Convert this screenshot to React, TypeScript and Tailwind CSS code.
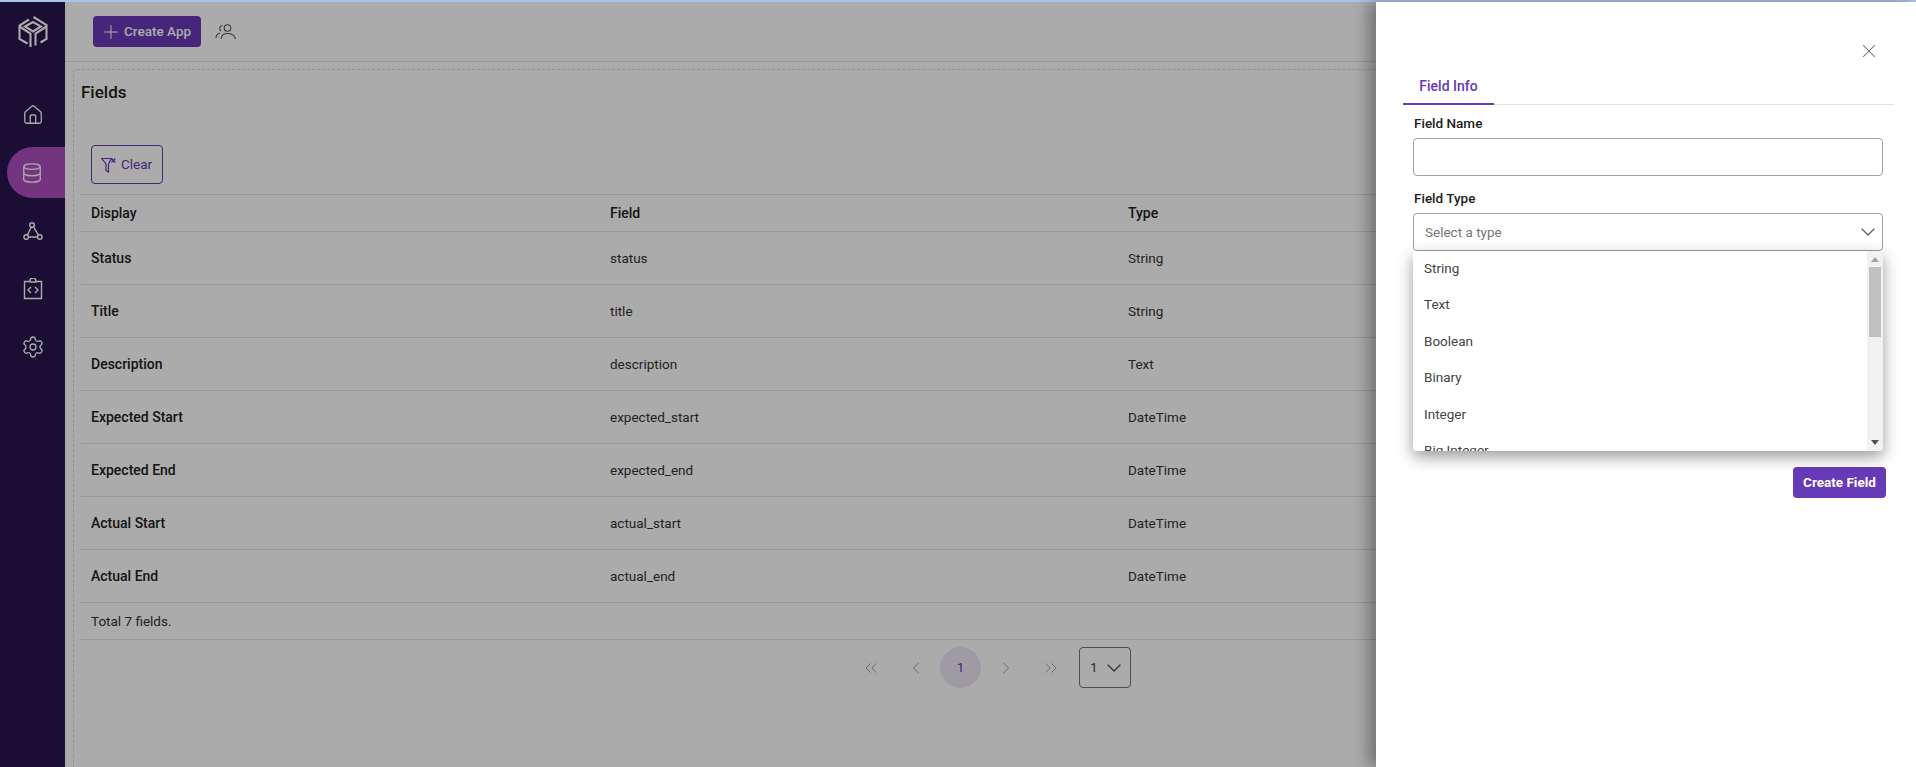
import { ChevronDown, ChevronLeft, ChevronRight, ChevronsLeft, ChevronsRight, Database, House, Plus, Settings, X } from 'lucide-react'

const fields = [
  ['Status', 'status', 'String'],
  ['Title', 'title', 'String'],
  ['Description', 'description', 'Text'],
  ['Expected Start', 'expected_start', 'DateTime'],
  ['Expected End', 'expected_end', 'DateTime'],
  ['Actual Start', 'actual_start', 'DateTime'],
  ['Actual End', 'actual_end', 'DateTime'],
]

const types = ['String', 'Text', 'Boolean', 'Binary', 'Integer', 'Big Integer']

function Logo() {
  return (
    <svg width="30" height="32" viewBox="0 0 30 32" fill="none" stroke="currentColor" strokeWidth="2.1">
      <path d="M11 3.500L1.500 9.500V23l8 4.500" />
      <path d="M15.500 1L28.500 9v14l-6 3.500" />
      <path d="M7 10.500l8-4.500 8 4.500-8 5z" />
      <path d="M1.500 10.500L12.500 17.500V31M28.500 10.500L17.500 17.500v12" />
    </svg>
  )
}

function GraphIcon() {
  return (
    <svg width="20" height="20" viewBox="0 0 20 20" fill="none" stroke="currentColor" strokeWidth="1.4">
      <circle cx="9" cy="4" r="2.300" />
      <circle cx="3.200" cy="16" r="2.300" />
      <circle cx="16.800" cy="16" r="2.300" />
      <path d="M8.200 6.200L4.300 14M10.500 5.800L15.400 14M5.500 16h9" />
    </svg>
  )
}

function CodeIcon() {
  return (
    <svg width="20" height="22" viewBox="0 0 20 22" fill="none" stroke="currentColor" strokeWidth="1.4">
      <path d="M7 3.500H1.500v17h17v-17H13" />
      <path d="M7 4V3a3 3 0 0 1 6 0v1z" />
      <path d="M8 9l-3 3 3 3M12 9l3 3-3 3" />
    </svg>
  )
}

function UsersIcon() {
  return (
    <svg width="22" height="18" viewBox="0 0 22 18" fill="none" stroke="currentColor" strokeWidth="1.1">
      <circle cx="12.500" cy="5" r="3.300" />
      <path d="M6 16c.4-3.600 3-5.500 6.500-5.500S19.600 12.400 20.500 16" />
      <path d="M7.500 2.500A3 3 0 0 0 6 8M1 15c.2-2.800 1.600-4.500 4-5" />
    </svg>
  )
}

function FilterClearIcon() {
  return (
    <svg width="15" height="16" viewBox="0 0 15 16" fill="none" stroke="currentColor" strokeWidth="1.2">
      <path d="M.8 1.500h9.500L7.500 7v8L5 13.500V7z" />
      <path d="M10.500 1.500l3.800 4M14.300 1.500l-3.800 4" />
    </svg>
  )
}

function Sidebar() {
  return (
    <aside className="w-[65px] shrink-0 flex flex-col items-center bg-[#27164f] text-white">
      <div className="h-[60px] flex items-center justify-center">
        <Logo />
      </div>
      <div className="mt-[24px] flex flex-col w-full">
        <div className="h-[58px] flex items-center justify-center">
          <House className="h-[22px] w-[22px]" strokeWidth={1.4} />
        </div>
        <div className="h-[58px] flex items-center justify-end">
          <div className="mb-[1px] h-[51px] w-[58px] rounded-l-[26px] bg-[#af4ebe] flex items-center pl-[14px]">
            <Database className="h-[22px] w-[22px]" strokeWidth={1.4} />
          </div>
        </div>
        <div className="h-[58px] flex items-center justify-center">
          <GraphIcon />
        </div>
        <div className="h-[58px] flex items-center justify-center">
          <CodeIcon />
        </div>
        <div className="h-[58px] flex items-center justify-center">
          <Settings className="h-[24px] w-[24px]" strokeWidth={1.3} />
        </div>
      </div>
    </aside>
  )
}

function FieldsTable() {
  return (
    <div className="mt-[10px]">
      <div className="grid grid-cols-[519px_518px_519px_1fr] h-[38px] items-center border-y border-[#e5e5e5] pl-[10px] text-[14px] font-medium text-[#222]">
        <div>Display</div>
        <div>Field</div>
        <div>Type</div>
      </div>
      {fields.map(([display, name, type]) => (
        <div
          key={name}
          className="grid grid-cols-[519px_518px_519px_1fr] h-[53px] items-center border-b border-[#e5e5e5] pl-[10px] text-[13.500px] text-[#333]"
        >
          <div className="text-[14px] font-medium text-[#222]">{display}</div>
          <div>{name}</div>
          <div>{type}</div>
        </div>
      ))}
      <div className="h-[37px] flex items-center border-b border-[#e5e5e5] pl-[10px] text-[13.500px] text-[#333]">
        Total 7 fields.
      </div>
    </div>
  )
}

function Pagination() {
  return (
    <div className="mt-[7px] flex items-center justify-center gap-1 text-[#9e9e9e]">
      <div className="h-[41px] w-[41px] flex items-center justify-center"><ChevronsLeft className="h-[20px] w-[20px]" strokeWidth={1.2} /></div>
      <div className="h-[41px] w-[41px] flex items-center justify-center"><ChevronLeft className="h-[20px] w-[20px]" strokeWidth={1.2} /></div>
      <div className="h-[41px] w-[41px] flex items-center justify-center rounded-full bg-[#ede7f6] text-[13.500px] text-[#673ab7]">1</div>
      <div className="h-[41px] w-[41px] flex items-center justify-center"><ChevronRight className="h-[20px] w-[20px]" strokeWidth={1.2} /></div>
      <div className="h-[41px] w-[41px] flex items-center justify-center"><ChevronsRight className="h-[20px] w-[20px]" strokeWidth={1.2} /></div>
      <div className="ml-[4px] h-[41px] w-[52px] flex items-center gap-[4px] rounded border border-[#757575] pl-[10px] text-[13.500px] text-[#444]">
        1
        <ChevronDown className="h-[24px] w-[24px]" strokeWidth={1.2} />
      </div>
    </div>
  )
}

function Drawer() {
  return (
    <div className="absolute bottom-0 right-0 top-[2px] w-[540px] bg-white pl-[27px] pr-[22px] shadow-[-8px_0_14px_rgba(0,0,0,0.32)]">
      <div className="flex justify-end pr-[14px] pt-[38px]">
        <X className="h-[22px] w-[22px] text-[#666]" strokeWidth={1.1} />
      </div>
      <div className="mt-[3px] border-b border-[#e0e0e0]">
        <div className="-mb-px h-[40px] w-[91px] border-b-2 border-[#673ab7] pt-[11px] text-center text-[14px] font-medium text-[#673ab7]">
          Field Info
        </div>
      </div>
      <div className="relative pl-[10px] pr-[11px] text-[13.500px]">
        <label className="mt-[8px] block h-[25px] pl-[1px] font-medium text-[#222]">Field Name</label>
        <div className="h-[38px] rounded border border-[#9e9e9e]" />
        <label className="mt-[12px] block h-[25px] pl-[1px] font-medium text-[#222]">Field Type</label>
        <div className="flex h-[38px] items-center justify-between rounded border border-[#9e9e9e] pl-[11px] pr-[2px] text-[#757575]">
          Select a type
          <ChevronDown className="h-[24px] w-[24px] text-[#555]" strokeWidth={1.1} />
        </div>
        <div className="mt-[37px] h-[101px] rounded border border-[#9e9e9e]" />
        <div className="mt-[78px] flex justify-end -mr-[3px]">
          <button className="h-[31px] w-[93px] rounded bg-[#673ab7] text-[13.500px] font-bold text-white">Create Field</button>
        </div>

        <div className="absolute left-[10px] right-[11px] top-[138px] h-[200px] overflow-hidden rounded-b bg-white shadow-[0_6px_16px_rgba(0,0,0,0.4)]">
          <div className="-mt-[1px] pl-[11px] text-[#444]">
            {types.map((t) => (
              <div key={t} className="flex h-[36.400px] items-center">
                {t}
              </div>
            ))}
          </div>
          <div className="absolute bottom-0 right-0 top-0 flex w-[16px] flex-col items-center justify-between bg-[#f1f1f1] py-[6px]">
            <div className="h-0 w-0 border-x-[4px] border-b-[5px] border-x-transparent border-b-[#a3a3a3]" />
            <div className="absolute left-[2px] right-[2px] top-[16px] h-[70px] bg-[#c1c1c1]" />
            <div className="h-0 w-0 border-x-[4px] border-t-[5px] border-x-transparent border-t-[#505050]" />
          </div>
        </div>
      </div>
    </div>
  )
}

export default function App() {
  return (
    <div className="relative h-[767px] w-full overflow-hidden bg-white font-['Roboto',sans-serif]">
      <div className="h-[2px] bg-[#a9c4ea]" />
      <div className="flex h-[765px]">
        <Sidebar />
        <main className="flex-1 flex flex-col">
          <header className="h-[60px] shrink-0 flex items-center gap-[14px] border-b border-[#e5e5e5] pl-[28px]">
            <button className="flex h-[31px] w-[108px] items-center gap-[2px] rounded bg-[#673ab7] pl-[7px] text-[13.500px] font-medium text-white">
              <Plus className="h-[22px] w-[22px]" strokeWidth={1.1} />
              Create App
            </button>
            <span className="text-[#555]"><UsersIcon /></span>
          </header>
          <div className="mx-[8px] mt-[7px] flex-1 rounded-t border border-b-0 border-dashed border-[#ddd] px-[7px]">
            <h2 className="mt-[10px] h-[24px] text-[17px] font-medium leading-[24px] text-[#222]">Fields</h2>
            <button className="ml-[10px] mt-[41px] flex h-[39px] w-[72px] items-center gap-[5px] rounded border border-[#673ab7] pl-[9px] text-[13.500px] text-[#673ab7]">
              <FilterClearIcon />
              Clear
            </button>
            <FieldsTable />
            <Pagination />
          </div>
        </main>
      </div>
      <div className="absolute inset-x-0 bottom-0 top-[2px] bg-black/33" />
      <Drawer />
    </div>
  )
}
